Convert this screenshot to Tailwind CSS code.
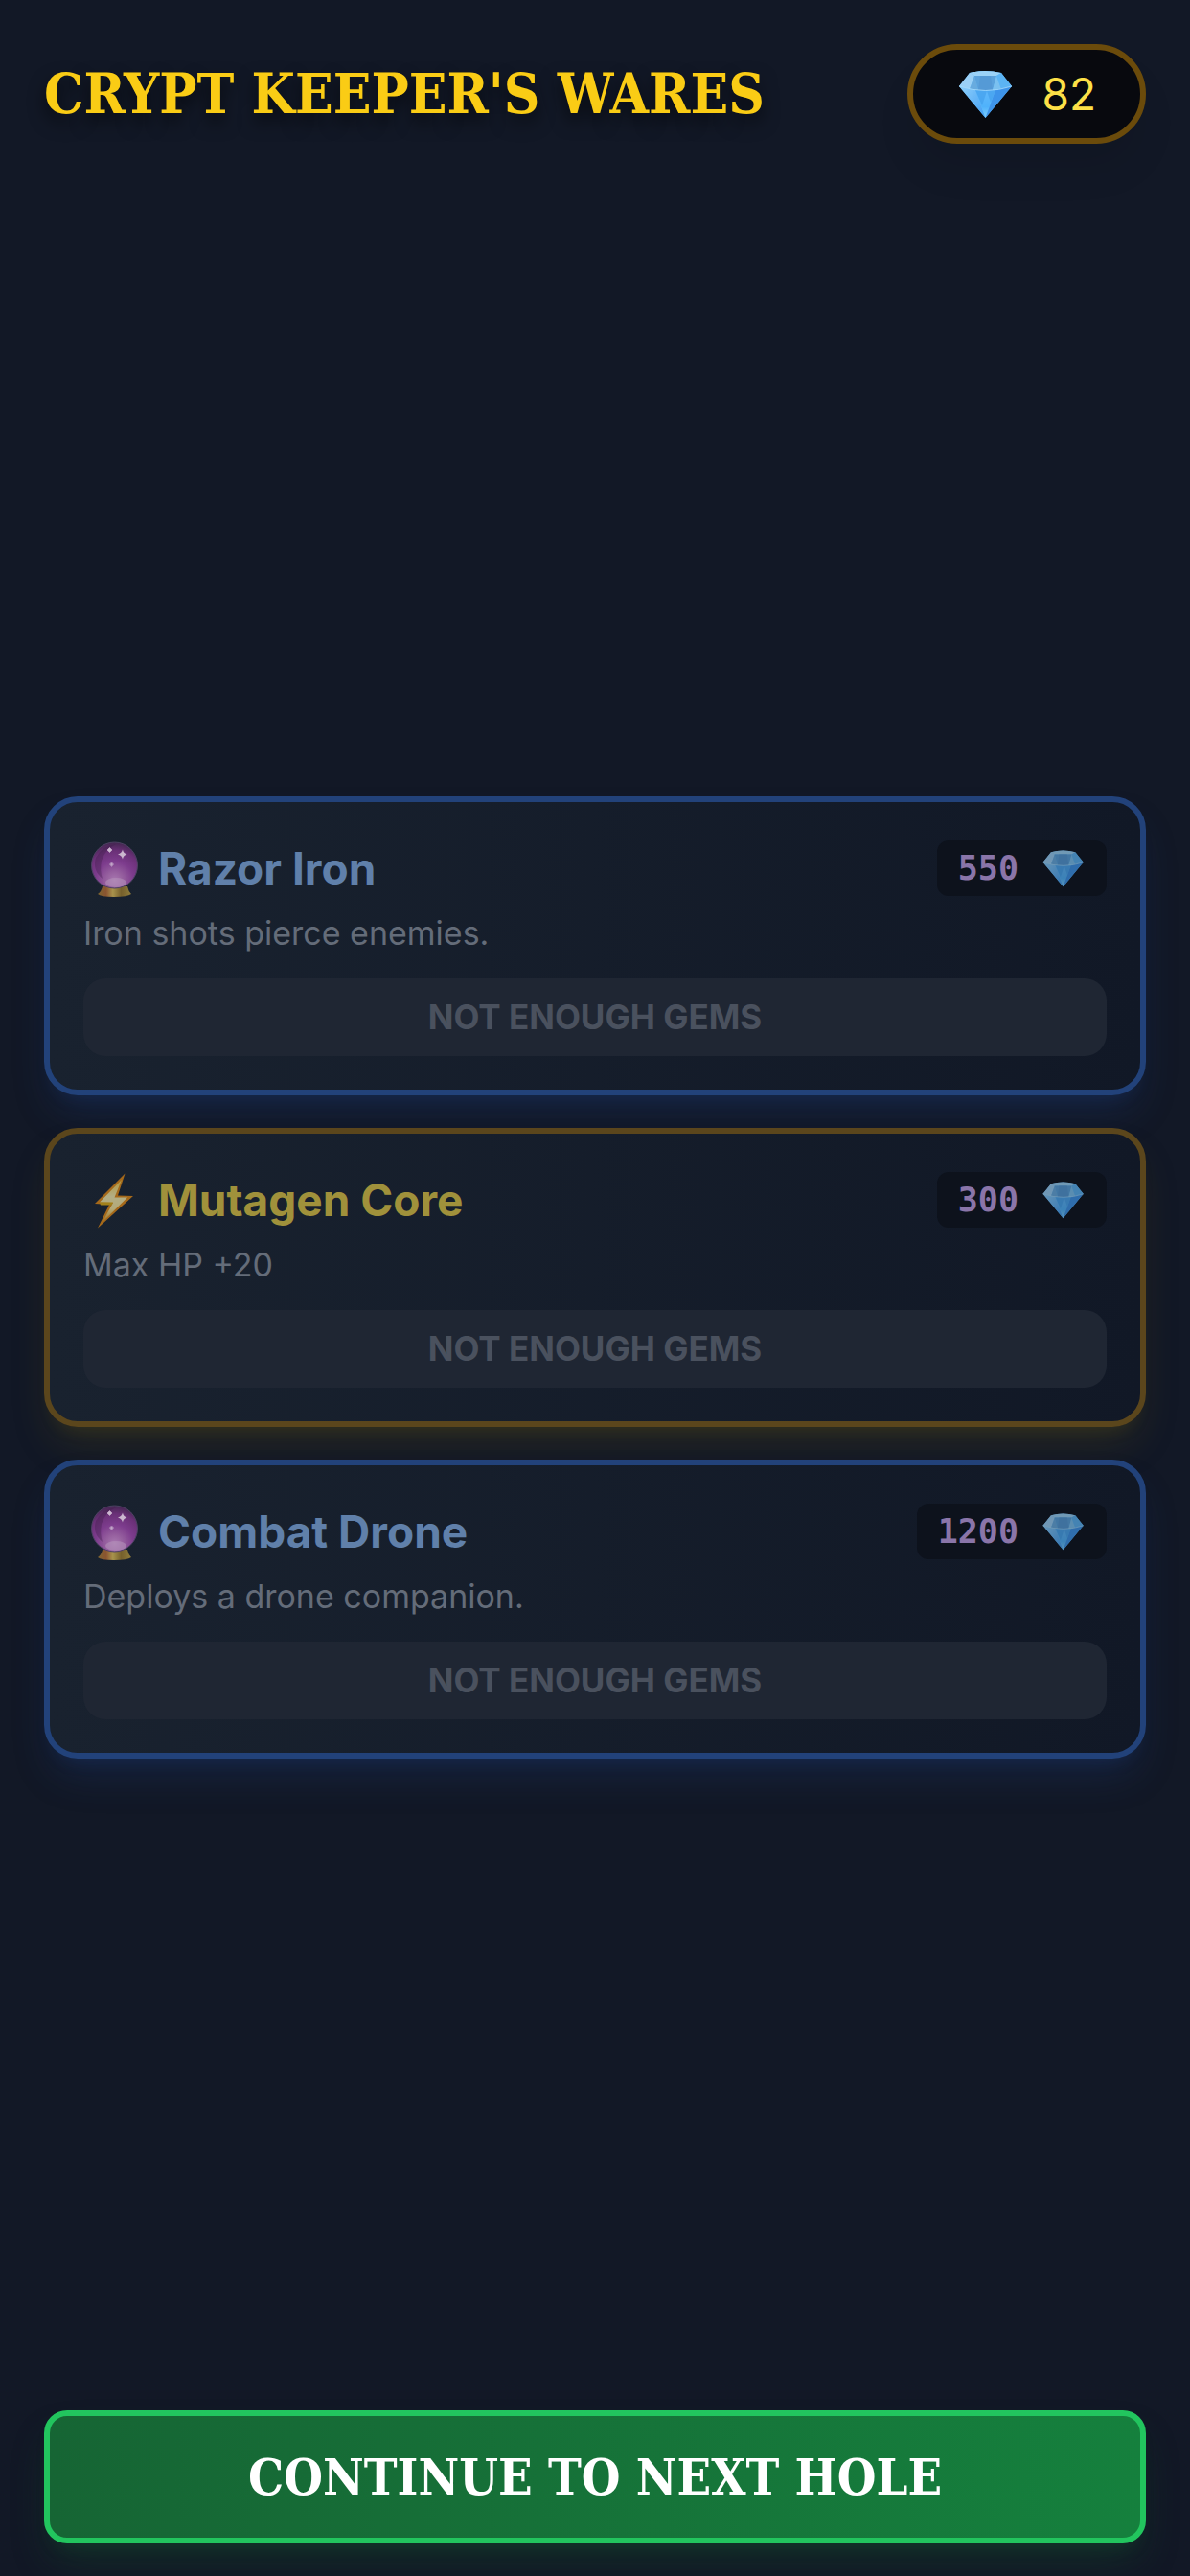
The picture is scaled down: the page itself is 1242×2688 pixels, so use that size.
<!DOCTYPE html>
<html lang="en">
  <head>
    <meta charset="utf-8" />
    <meta name="viewport" content="width=device-width, initial-scale=1" />
    <title>Crypt Keeper's Wares</title>
    <script src="https://cdn.jsdelivr.net/npm/@tailwindcss/browser@4"></script>
  </head>
  <body class="bg-[#121826]">
    <!-- shared icons -->
    <svg class="absolute w-0 h-0" aria-hidden="true">
      <defs>
        <linearGradient id="gem-left" x1="0" y1="0" x2="1" y2="1">
          <stop offset="0" stop-color="#8fd0fb" />
          <stop offset="1" stop-color="#3f9df3" />
        </linearGradient>
        <linearGradient id="gem-mid" x1="0" y1="0" x2="0" y2="1">
          <stop offset="0" stop-color="#62b8fb" />
          <stop offset=".6" stop-color="#4fb2fb" />
          <stop offset="1" stop-color="#7fd0ff" />
        </linearGradient>
        <radialGradient id="orb" cx=".5" cy=".82" r=".82">
          <stop offset="0" stop-color="#a878b0" />
          <stop offset=".22" stop-color="#96609f" />
          <stop offset=".5" stop-color="#7d3c8d" />
          <stop offset=".78" stop-color="#6a3077" />
          <stop offset="1" stop-color="#42264f" />
        </radialGradient>
        <linearGradient id="orb-base" x1="0" x2="1">
          <stop offset="0" stop-color="#7d6430" />
          <stop offset=".25" stop-color="#8a5430" />
          <stop offset=".45" stop-color="#a8934c" />
          <stop offset=".7" stop-color="#76602c" />
          <stop offset="1" stop-color="#8f7c3b" />
        </linearGradient>
        <linearGradient id="bolt-fill" x1="0" y1="0" x2="0" y2="1">
          <stop offset="0" stop-color="#b3963a" />
          <stop offset=".4" stop-color="#b3ae85" />
          <stop offset=".7" stop-color="#b3aa78" />
          <stop offset="1" stop-color="#a5701c" />
        </linearGradient>
      </defs>
      <symbol id="gem" viewBox="0 0 60 60">
        <path d="M2 22 L13 8 Q29 4 46 8 L57 22 L29.500 55Z" fill="#64bbfa" />
        <path d="M13 8 Q29 4 46 8 L41 11 H18Z" fill="#9bd2f7" />
        <path d="M13 8 L18 11 L13 25 L2 22Z" fill="#9bd0f6" />
        <path d="M18 11 L22 26 L13 25Z" fill="#68abdf" />
        <path d="M18 11 H41 L37 26 H22Z" fill="#5ba2dc" />
        <path d="M22 26 L24 11 H35 L37 26Z" fill="#559ad6" />
        <path d="M41 11 L46 25 L37 26Z" fill="#7bc1f0" />
        <path d="M46 8 L57 22 L46 25 L41 11Z" fill="#5cb4f4" />
        <path d="M2 22 L19 26 L29.500 55Z" fill="url(#gem-left)" />
        <path d="M19 26 H40 L29.500 55Z" fill="url(#gem-mid)" />
        <path d="M40 26 L57 22 L29.500 55Z" fill="#3e94ea" />
        <path d="M19 26 L26 42 L31 27 L35 39 L40 26" fill="#3f9ceb" opacity=".6" />
        <path d="M2 22 Q30 31 57 22" fill="none" stroke="#a9dcfb" stroke-width="1" opacity=".8" />
      </symbol>
      <symbol id="crystal-ball" viewBox="0 0 66 66">
        <path d="M20 52 H46 Q47 57 50 60 Q46 63 32 63 Q18 63 15 60 Q19 57 20 52Z" fill="url(#orb-base)" />
        <circle cx="32.500" cy="30" r="24" fill="url(#orb)" stroke="#4d4163" stroke-width="1" />
        <path d="M13 22 Q20 9 34 8 Q23 13 19 25 Q17 36 20 44 Q9 35 13 22Z" fill="#3c1e49" opacity=".35" />
        <ellipse cx="34" cy="48" rx="11" ry="5" fill="#b795bb" opacity=".55" />
        <path d="M41 13.500 Q41.500 17.500 45.500 18.500 Q41.500 19.500 41 23.500 Q40 19.500 36 18.500 Q40 17.500 41 13.500Z" fill="#cbb7cf" />
        <path d="M27.500 11.500 L30 14 L27.500 16.500 L25 14Z" fill="#cbb7cf" stroke="#b79abd" />
        <path d="M29.500 27 L31.500 29 L29.500 31.500 L27.500 29Z" fill="#c2a5c9" stroke="#a982b3" />
      </symbol>
      <symbol id="bolt" viewBox="0 0 66 66">
        <path d="M43.500 5.500 L12 37 L27 38 L15 62.500 L52 29 L36 28.500Z" fill="#a5691a" />
        <path d="M40 12 L17 35.500 L31 36 L20 56 L46 30.500 L32.500 30.500Z" fill="url(#bolt-fill)" />
        <path d="M17 35.500 H31 L29.500 38.500 H18Z" fill="#a3821a" />
      </symbol>
    </svg>

    <div class="min-h-screen flex flex-col p-[46px] pb-[34px] font-['Inter','Liberation_Sans',sans-serif]">
      <header class="flex items-center justify-between">
        <h1 class="font-['DejaVu_Serif_Condensed','DejaVu_Serif','Liberation_Serif',serif] font-bold text-[58px] leading-[60px] text-[#facc15] [text-shadow:0_9px_18px_rgb(0_0_0/0.6)]">CRYPT KEEPER'S WARES</h1>
        <div class="flex items-center gap-[28px] h-[104px] px-[46px] rounded-full border-6 border-[#6b4b0b] bg-[#08090e] shadow-[0_30px_45px_-9px_rgb(0_0_0/0.1)]">
          <svg class="size-[60px]" aria-hidden="true"><use href="#gem" /></svg>
          <span class="text-[46px] leading-[60px] text-[#fde047]">82</span>
        </div>
      </header>

      <main class="flex-1 flex flex-col justify-center gap-[34px]">
        <section class="rounded-[35px] border-6 border-[#22427a] bg-linear-to-r from-[#19222f] to-[#111826] p-[35px] shadow-[0_24px_40px_-9px_rgb(30_64_130/0.3),0_12px_18px_-12px_rgb(30_64_130/0.3)]">
          <div class="flex items-center justify-between h-[69px] mb-[6px]">
            <h2 class="flex items-center gap-[12px] text-[46px] font-bold text-[#6080aa]">
              <svg class="size-[66px]" aria-hidden="true"><use href="#crystal-ball" /></svg>
              Razor Iron
            </h2>
            <div class="flex items-center gap-[24px] h-[58px] px-[22px] rounded-[12px] bg-[#0d121c]">
              <span class="font-['DejaVu_Sans_Mono','Liberation_Mono',monospace] font-bold text-[35px] text-[#8a75a9]">550</span>
              <svg class="size-[46px] opacity-70" aria-hidden="true"><use href="#gem" /></svg>
            </div>
          </div>
          <p class="mb-[20px] text-[34px] leading-[54px] text-[#646c79]">Iron shots pierce enemies.</p>
          <button class="block w-full h-[81px] rounded-[23px] bg-[#1f2633] text-[35px] font-bold text-[#4a515e]" disabled>NOT ENOUGH GEMS</button>
        </section>

        <section class="rounded-[35px] border-6 border-[#5b461c] bg-linear-to-r from-[#19222f] to-[#111826] p-[35px] shadow-[0_24px_40px_-9px_rgb(113_95_18/0.25),0_12px_18px_-12px_rgb(113_95_18/0.25)]">
          <div class="flex items-center justify-between h-[69px] mb-[6px]">
            <h2 class="flex items-center gap-[12px] text-[46px] font-bold text-[#a0913b]">
              <svg class="size-[66px]" aria-hidden="true"><use href="#bolt" /></svg>
              Mutagen Core
            </h2>
            <div class="flex items-center gap-[24px] h-[58px] px-[22px] rounded-[12px] bg-[#0d121c]">
              <span class="font-['DejaVu_Sans_Mono','Liberation_Mono',monospace] font-bold text-[35px] text-[#8a75a9]">300</span>
              <svg class="size-[46px] opacity-70" aria-hidden="true"><use href="#gem" /></svg>
            </div>
          </div>
          <p class="mb-[20px] text-[34px] leading-[54px] text-[#646c79]">Max HP +20</p>
          <button class="block w-full h-[81px] rounded-[23px] bg-[#1f2633] text-[35px] font-bold text-[#4a515e]" disabled>NOT ENOUGH GEMS</button>
        </section>

        <section class="rounded-[35px] border-6 border-[#22427a] bg-linear-to-r from-[#19222f] to-[#111826] p-[35px] shadow-[0_24px_40px_-9px_rgb(30_64_130/0.3),0_12px_18px_-12px_rgb(30_64_130/0.3)]">
          <div class="flex items-center justify-between h-[69px] mb-[6px]">
            <h2 class="flex items-center gap-[12px] text-[46px] font-bold text-[#6080aa]">
              <svg class="size-[66px]" aria-hidden="true"><use href="#crystal-ball" /></svg>
              Combat Drone
            </h2>
            <div class="flex items-center gap-[24px] h-[58px] px-[22px] rounded-[12px] bg-[#0d121c]">
              <span class="font-['DejaVu_Sans_Mono','Liberation_Mono',monospace] font-bold text-[35px] text-[#8a75a9]">1200</span>
              <svg class="size-[46px] opacity-70" aria-hidden="true"><use href="#gem" /></svg>
            </div>
          </div>
          <p class="mb-[20px] text-[34px] leading-[54px] text-[#646c79]">Deploys a drone companion.</p>
          <button class="block w-full h-[81px] rounded-[23px] bg-[#1f2633] text-[35px] font-bold text-[#4a515e]" disabled>NOT ENOUGH GEMS</button>
        </section>
      </main>

      <button class="w-full h-[139px] rounded-[24px] border-6 border-[#22c55e] bg-linear-to-r from-[#166534] to-[#15803d] font-['DejaVu_Serif_Condensed','DejaVu_Serif','Liberation_Serif',serif] font-bold text-[52px] text-white shadow-[0_24px_40px_-9px_rgb(20_83_45/0.4),0_12px_18px_-12px_rgb(20_83_45/0.4)]">CONTINUE TO NEXT HOLE</button>
    </div>
  </body>
</html>
